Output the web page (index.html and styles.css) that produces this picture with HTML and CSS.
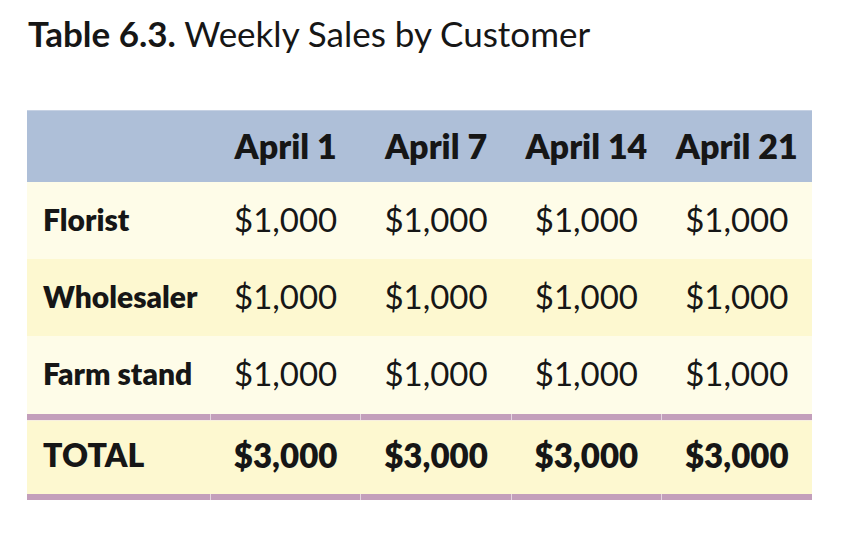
FILE: index.html
```html
<!DOCTYPE html>
<html lang="en">
<head>
<meta charset="utf-8">
<title>Table 6.3. Weekly Sales by Customer</title>
<link rel="stylesheet" href="styles.css">
</head>
<body>
<div class="page">
  <h1 class="caption"><span class="caption-num">Table 6.3.</span> Weekly Sales by Customer</h1>
  <table class="sales">
    <colgroup>
      <col class="c-name">
      <col class="c-val">
      <col class="c-val">
      <col class="c-val">
      <col class="c-val">
    </colgroup>
    <thead>
      <tr class="head">
        <th></th>
        <th>April 1</th>
        <th>April 7</th>
        <th>April 14</th>
        <th>April 21</th>
      </tr>
    </thead>
    <tbody>
      <tr class="row light">
        <th>Florist</th>
        <td>$1,000</td><td>$1,000</td><td>$1,000</td><td>$1,000</td>
      </tr>
      <tr class="row dark">
        <th>Wholesaler</th>
        <td>$1,000</td><td>$1,000</td><td>$1,000</td><td>$1,000</td>
      </tr>
      <tr class="row light row-last">
        <th>Farm stand</th>
        <td>$1,000</td><td>$1,000</td><td>$1,000</td><td>$1,000</td>
      </tr>
      <tr class="rule rule-top">
        <td></td><td></td><td></td><td></td><td></td>
      </tr>
      <tr class="row dark total">
        <th>TOTAL</th>
        <td>$3,000</td><td>$3,000</td><td>$3,000</td><td>$3,000</td>
      </tr>
      <tr class="rule">
        <td></td><td></td><td></td><td></td><td></td>
      </tr>
    </tbody>
  </table>
</div>
</body>
</html>
```
FILE: styles.css
```css
html, body {
  margin: 0;
  padding: 0;
  background: #ffffff;
}

body {
  font-family: Lato, "Open Sans", "Liberation Sans", sans-serif;
  color: #161616;
}

.page {
  padding: 11px 0 0 27px;
}

.caption {
  margin: 0 0 0 1px;
  font-size: 35px;
  font-weight: 400;
  line-height: 44px;
  letter-spacing: 0;
}

.caption-num {
  font-weight: 700;
}

.sales {
  margin-top: 55px;
  width: 785px;
  border-collapse: collapse;
  border-spacing: 0;
  table-layout: fixed;
}

.c-name { width: 183px; }
.c-val { width: 150px; }

.sales th,
.sales td {
  padding: 0 0 4px 0;
  font-size: 33px;
  line-height: 40px;
  white-space: nowrap;
}

.head {
  background: #aebfd8;
  height: 72px;
  box-shadow: inset 0 1px 0 #c6d1e3;
}

.head th {
  padding-bottom: 0;
  font-size: 34px;
  font-weight: 800;
  text-align: center;
}

.row th {
  text-align: left;
  font-weight: 800;
  padding-left: 16px;
  font-size: 30px;
}

.row td {
  text-align: center;
  font-weight: 400;
}

.light { background: #fefce8; }
.dark { background: #fdf8d0; }

.row { height: 77px; }
.row-last { height: 78px; }

.total { height: 73px; }
.total th { font-size: 32px; }
.total td { font-weight: 800; }

.rule {
  height: 6px;
}

.rule td {
  height: 6px;
  padding: 0;
  background: #c39fbb;
  border-left: 1px solid #e6d6e2;
}

.rule td:first-child {
  border-left: none;
}

.rule-top td {
  border-bottom: 1px solid #f7efe0;
}
```
